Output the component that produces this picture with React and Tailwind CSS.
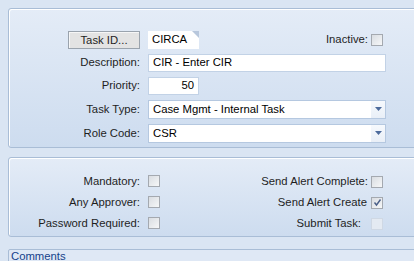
const font = { fontFamily: '"Liberation Sans", Arial, sans-serif' };

function Box({ checked, disabled }) {
  return (
    <span
      className={
        "inline-flex h-[12px] w-[12px] items-center justify-center border " +
        (disabled
          ? "border-[#cfd8e4] bg-[#e4eaf2]"
          : "border-[#a4a9b0] bg-gradient-to-br from-[#d9dde2] to-[#f6f7f8]")
      }
    >
      {checked && (
        <svg width="9" height="9" viewBox="0 0 9 9">
          <path d="M1.5 4.5 L3.5 7 L7.5 1.5" fill="none" stroke="#4a5f88" strokeWidth="1.4" />
        </svg>
      )}
    </span>
  );
}

function Select({ value }) {
  return (
    <div className="flex h-[19px] w-[238px] items-center border border-[#b5c8e0] bg-white">
      <span className="flex-1 pl-[4px] text-[11.3px] text-black">{value}</span>
      <span className="flex h-full w-[14px] items-center justify-center bg-gradient-to-b from-[#f6f9fd] to-[#e9eff7]">
        <svg width="7" height="4" viewBox="0 0 7 4">
          <path d="M0 0 H7 L3.5 4 Z" fill="#4d6b9c" />
        </svg>
      </span>
    </div>
  );
}

function Label({ children }) {
  return <div className="w-[131px] text-right text-[11.3px] text-[#1e1e1e]">{children}</div>;
}

export default function App() {
  return (
    <div className="h-[261px] w-[414px] overflow-hidden bg-[#dae5f3]" style={font}>
      {/* top panel */}
      <div className="ml-[8px] mt-[8px] h-[140px] w-[420px] rounded-tl-[3px] rounded-bl-[3px] border border-[#a9bdd6] bg-gradient-to-b from-[#e4ecf7] to-[#cddcef] shadow-[inset_1px_1px_0_#ffffff]">
        <div className="flex flex-col gap-[4px] pt-[21px]">
          <div className="flex h-[19px] items-center">
            <div className="flex w-[131px] justify-end">
              <button className="h-[18px] w-[72px] border border-[#9aa3ad] bg-[#e3e3e3] text-[11.3px] text-[#1e1e1e] shadow-[inset_1px_1px_0_#f6f6f6]">
                Task ID...
              </button>
            </div>
            <div className="relative ml-[8px] flex h-[18px] w-[51px] items-center bg-white pl-[4px] text-[11.3px] text-black">
              CIRCA
              <span className="absolute right-0 top-0 h-0 w-0 border-l-[7px] border-t-[7px] border-l-transparent border-t-[#b8c7dc]" />
            </div>
            <div className="ml-auto mr-[44px] flex items-center gap-[3px]">
              <span className="text-[11.3px] text-[#1e1e1e]">Inactive:</span>
              <Box />
            </div>
          </div>
          <div className="flex h-[19px] items-center">
            <Label>Description:</Label>
            <div className="ml-[8px] flex h-[18px] w-[238px] items-center border border-[#c2d2e6] bg-white pl-[4px] text-[11.3px] text-black">
              CIR - Enter CIR
            </div>
          </div>
          <div className="flex h-[19px] items-center">
            <Label>Priority:</Label>
            <div className="ml-[8px] flex h-[18px] w-[51px] items-center justify-end border border-[#c2d2e6] bg-white pr-[4px] text-[11.3px] text-black">
              50
            </div>
          </div>
          <div className="flex h-[20px] items-center">
            <Label>Task Type:</Label>
            <div className="ml-[8px]">
              <Select value="Case Mgmt - Internal Task" />
            </div>
          </div>
          <div className="flex h-[20px] items-center">
            <Label>Role Code:</Label>
            <div className="ml-[8px]">
              <Select value="CSR" />
            </div>
          </div>
        </div>
      </div>

      {/* flags panel */}
      <div className="ml-[8px] mt-[9px] h-[80px] w-[420px] rounded-tl-[3px] rounded-bl-[3px] border border-[#a9bdd6] bg-gradient-to-b from-[#e4ecf7] to-[#cddcef] shadow-[inset_1px_1px_0_#ffffff]">
        <div className="flex flex-col gap-[8px] pt-[17px]">
          <div className="flex h-[13px] items-center">
            <Label>Mandatory:</Label>
            <div className="ml-[8px]"><Box /></div>
            <div className="ml-auto mr-[44px] flex items-center gap-[3px]">
              <span className="text-[11.3px] text-[#1e1e1e]">Send Alert Complete:</span>
              <Box />
            </div>
          </div>
          <div className="flex h-[13px] items-center">
            <Label>Any Approver:</Label>
            <div className="ml-[8px]"><Box /></div>
            <div className="ml-auto mr-[44px] flex items-center gap-[4px]">
              <span className="text-[11.3px] text-[#1e1e1e]">Send Alert Create</span>
              <Box checked />
            </div>
          </div>
          <div className="flex h-[13px] items-center">
            <Label>Password Required:</Label>
            <div className="ml-[8px]"><Box /></div>
            <div className="ml-auto mr-[44px] flex items-center gap-[10px]">
              <span className="text-[11.3px] text-[#1e1e1e]">Submit Task:</span>
              <Box disabled />
            </div>
          </div>
        </div>
      </div>

      {/* comments */}
      <div className="ml-[8px] mt-[12px] h-[30px] w-[420px] rounded-tl-[2px] border border-[#a9bdd6] bg-[#dfe8f5] pl-[2px] text-[11.3px] leading-[12px] text-[#15428b]">
        Comments
      </div>
    </div>
  );
}
